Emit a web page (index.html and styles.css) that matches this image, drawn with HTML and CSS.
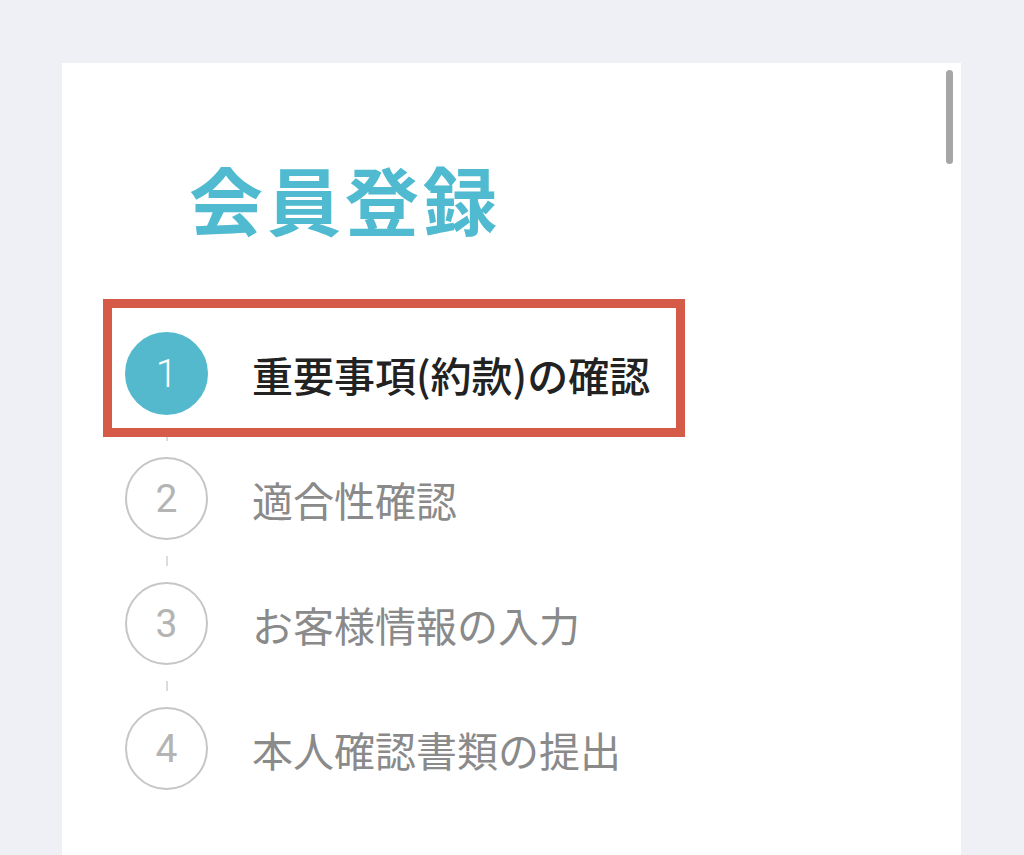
FILE: index.html
```html
<!DOCTYPE html>
<html lang="ja">
<head>
<meta charset="utf-8">
<title>会員登録</title>
<link rel="stylesheet" href="styles.css">
</head>
<body>
<div class="card">
  <div class="scrollbar"></div>
  <h1 class="title">会員登録</h1>
  <div class="steps">
    <div class="step step-active">
      <div class="circle circle-active">1</div>
      <div class="label label-active">重要事項(約款)の確認</div>
    </div>
    <div class="connector"><span class="dash"></span></div>
    <div class="step">
      <div class="circle">2</div>
      <div class="label">適合性確認</div>
    </div>
    <div class="connector"><span class="dash"></span></div>
    <div class="step">
      <div class="circle">3</div>
      <div class="label">お客様情報の入力</div>
    </div>
    <div class="connector"><span class="dash"></span></div>
    <div class="step">
      <div class="circle">4</div>
      <div class="label">本人確認書類の提出</div>
    </div>
  </div>
</div>
</body>
</html>
```

FILE: styles.css
```css
html, body {
  margin: 0;
  padding: 0;
  background: #eef0f5;
  overflow: hidden;
}

.card {
  position: relative;
  margin: 63px 0 0 62px;
  width: 899px;
  height: calc(100vh - 63px);
  background: #ffffff;
  padding-top: 98px;
  box-sizing: border-box;
}

.scrollbar {
  position: absolute;
  top: 7px;
  right: 8px;
  width: 7px;
  height: 94px;
  border-radius: 4px;
  background: #a6a6a6;
}

.title {
  margin: 0;
  padding-left: 127px;
  font-family: "Noto Sans CJK JP", sans-serif;
  font-weight: 700;
  font-size: 74px;
  line-height: 74px;
  letter-spacing: 4px;
  color: #4fbad0;
}

.steps {
  margin-top: 97px;
  padding-left: 63px;
  display: flex;
  flex-direction: column;
}

.step {
  display: flex;
  align-items: center;
  gap: 44px;
  height: 83px;
}

.step-active {
  position: relative;
}

.step-active::after {
  content: "";
  position: absolute;
  left: -22px;
  top: -33px;
  width: 582px;
  height: 138px;
  box-sizing: border-box;
  border: 9px solid #d65a48;
}

.circle {
  width: 83px;
  height: 83px;
  box-sizing: border-box;
  border-radius: 50%;
  border: 2px solid #c6c6c6;
  display: flex;
  align-items: center;
  justify-content: center;
  font-family: Roboto, "Liberation Sans", sans-serif;
  font-weight: 400;
  font-size: 39px;
  color: #b4b4b4;
  flex: none;
}

.circle-active {
  background: #55b9ce;
  border-color: #55b9ce;
  color: #ffffff;
  font-weight: 300;
}

.label {
  font-family: "Noto Sans CJK JP", sans-serif;
  font-size: 41px;
  font-weight: 400;
  color: #8a8a8a;
  white-space: nowrap;
}

.label-active {
  color: #222222;
  font-weight: 500;
}

.connector {
  width: 83px;
  height: 42px;
  display: flex;
  align-items: center;
  justify-content: center;
}

.dash {
  width: 2px;
  height: 10px;
  background: #dcdcdc;
}
```
